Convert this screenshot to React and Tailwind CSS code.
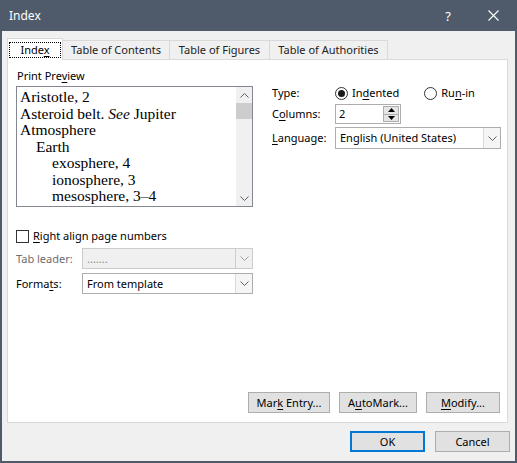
import { useState } from "react";

const ui = { fontFamily: '"Noto Sans", "Open Sans", sans-serif' };
const serif = { fontFamily: '"Liberation Serif", "Times New Roman", serif' };

// letter with keyboard mnemonic underline
const K = ({ children }) => (
  <span className="underline underline-offset-[2px] decoration-[1px]">{children}</span>
);

const Chevron = ({ up = false, color = "#606060" }) => (
  <svg width="9" height="5" viewBox="0 0 9 5" className={up ? "rotate-180" : ""}>
    <path d="M0.5 0.5 L4.5 4.5 L8.5 0.5" fill="none" stroke={color} strokeWidth="1" />
  </svg>
);

const Tri = ({ up = false }) => (
  <svg width="7" height="4" viewBox="0 0 7 4">
    {up ? <path d="M0 4 L3.5 0 L7 4 Z" fill="#000" /> : <path d="M0 0 L3.5 4 L7 0 Z" fill="#000" />}
  </svg>
);

const Combo = ({ value, disabled = false, className = "" }) => (
  <div
    className={`flex h-[21px] items-stretch border ${
      disabled ? "border-[#cccccc] bg-[#f0f0f0] text-[#8a8a8a]" : "border-[#adadad] bg-white text-black"
    } ${className}`}
  >
    <div className="flex flex-1 items-center pl-[4px]">{value}</div>
    <div
      className={`flex w-[17px] items-center justify-center border-l ${
        disabled ? "border-[#cccccc]" : "border-[#d9d9d9] bg-[#f5f5f5]"
      }`}
    >
      <Chevron color={disabled ? "#a0a0a0" : "#606060"} />
    </div>
  </div>
);

const Btn = ({ children, w, focus = false }) => (
  <button
    className={`flex h-[21px] items-center justify-center bg-[#e1e1e1] text-black ${
      focus ? "border-2 border-[#0078d7]" : "border border-[#adadad]"
    }`}
    style={{ width: w }}
  >
    <span>{children}</span>
  </button>
);

const Radio = ({ checked }) => (
  <span className="flex h-[13px] w-[13px] items-center justify-center rounded-full border border-[#333333] bg-white">
    {checked && <span className="h-[7px] w-[7px] rounded-full bg-[#1a1a1a]" />}
  </span>
);

const previewLines = [
  { indent: 0, text: <>Aristotle, 2</> },
  { indent: 0, text: <>Asteroid belt. <i>See</i> Jupiter</> },
  { indent: 0, text: <>Atmosphere</> },
  { indent: 1, text: <>Earth</> },
  { indent: 2, text: <>exosphere, 4</> },
  { indent: 2, text: <>ionosphere, 3</> },
  { indent: 2, text: <>mesosphere, 3–4</> },
];

const tabs = [
  { label: "Table of Contents", w: 107 },
  { label: "Table of Figures", w: 100 },
  { label: "Table of Authorities", w: 118 },
];

export default function App() {
  const [type, setType] = useState("indented");

  return (
    <div className="flex h-[463px] w-[517px] flex-col bg-[#4f5b6a] text-[11px] leading-[16px]" style={ui}>
      {/* title bar */}
      <div className="flex h-[31px] shrink-0 items-center pl-[9px] text-white">
        <span className="flex-1 text-[12px]">Index</span>
        <span className="mr-[37px] text-[13px]">?</span>
        <svg width="11" height="11" viewBox="0 0 11 11" className="mr-[18px]">
          <path d="M0.5 0.5 L10.5 10.5 M10.5 0.5 L0.5 10.5" stroke="#ffffff" strokeWidth="1.1" />
        </svg>
      </div>

      <div className="mx-[2px] mb-[2px] flex flex-1 flex-col bg-[#f0f0f0] pl-[5px] pr-[5px] pt-[7px]">
        {/* tabs */}
        <div className="flex h-[21px] items-end">
          <div className="relative z-10 -mb-[1px] flex h-[22px] w-[56px] items-center justify-center border-x border-t border-[#d9d9d9] bg-white">
            <span className="border border-dotted border-black px-[10px] leading-[14px]">
              Inde<K>x</K>
            </span>
          </div>
          {tabs.map((t) => (
            <div
              key={t.label}
              className="flex h-[19px] items-center justify-center border-t border-r border-[#d9d9d9] text-[#222]"
              style={{ width: t.w }}
            >
              {t.label}
            </div>
          ))}
        </div>

        {/* tab panel */}
        <div className="mr-[2px] flex h-[364px] flex-col border border-[#d9d9d9] bg-white">
          <div className="flex">
            {/* left column */}
            <div className="ml-[8px] flex w-[237px] flex-col pt-[8px]">
              <div className="pl-[1px]">
                Print Pre<K>v</K>iew
              </div>
              <div className="mt-[2px] flex h-[121px] border border-[#828790] bg-white">
                <div className="flex-1 overflow-hidden pl-[3px] pt-[2px] text-[15.5px] leading-[16.5px]" style={serif}>
                  {previewLines.map((l, i) => (
                    <div key={i} className="whitespace-nowrap" style={{ paddingLeft: l.indent * 16 }}>
                      {l.text}
                    </div>
                  ))}
                </div>
                <div className="flex w-[16px] flex-col bg-[#f0f0f0]">
                  <div className="flex h-[16px] items-center justify-center">
                    <Chevron up color="#606060" />
                  </div>
                  <div className="h-[16px] bg-[#cdcdcd]" />
                  <div className="flex-1" />
                  <div className="flex h-[16px] items-center justify-center">
                    <Chevron color="#606060" />
                  </div>
                </div>
              </div>

              <label className="mt-[21px] flex items-center">
                <span className="h-[13px] w-[13px] border border-[#333333] bg-white" />
                <span className="ml-[4px]">
                  <K>R</K>ight align page numbers
                </span>
              </label>

              <div className="mt-[4px] flex items-center">
                <span className="w-[66px] text-[#6d6d6d]">Tab leader:</span>
                <Combo value="......." disabled className="flex-1" />
              </div>
              <div className="mt-[4px] flex items-center">
                <span className="w-[66px]">
                  Forma<K>t</K>s:
                </span>
                <Combo value="From template" className="flex-1" />
              </div>
            </div>

            {/* right column */}
            <div className="ml-[19px] flex flex-1 flex-col pr-[6px] pt-[23px]">
              <div className="flex h-[20px] items-center">
                <span className="w-[63px]">Type:</span>
                <button className="flex items-center" onClick={() => setType("indented")}>
                  <Radio checked={type === "indented"} />
                  <span className="ml-[4px]">
                    In<K>d</K>ented
                  </span>
                </button>
                <button className="ml-[25px] flex items-center" onClick={() => setType("runin")}>
                  <Radio checked={type === "runin"} />
                  <span className="ml-[4px]">
                    Ru<K>n</K>-in
                  </span>
                </button>
              </div>
              <div className="mt-[1px] flex h-[20px] items-center">
                <span className="w-[63px]">
                  C<K>o</K>lumns:
                </span>
                <div className="flex h-[20px] w-[66px] items-stretch border border-[#adadad] bg-white">
                  <span className="flex flex-1 items-center pl-[3px]">2</span>
                  <div className="my-[1px] mr-[1px] flex w-[16px] flex-col">
                    <span className="flex flex-1 items-center justify-center border border-[#adadad] bg-[#e5e5e5]">
                      <Tri up />
                    </span>
                    <span className="flex flex-1 items-center justify-center border border-t-0 border-[#adadad] bg-[#e5e5e5]">
                      <Tri />
                    </span>
                  </div>
                </div>
              </div>
              <div className="mt-[3px] flex items-center">
                <span className="w-[63px]">
                  <K>L</K>anguage:
                </span>
                <Combo value="English (United States)" className="h-[22px] flex-1" />
              </div>
            </div>
          </div>

          <div className="mt-auto flex justify-end gap-[9px] pb-[9px] pr-[7px]">
            <Btn w={82}>
              Mar<K>k</K> Entry...
            </Btn>
            <Btn w={78}>
              A<K>u</K>toMark...
            </Btn>
            <Btn w={74}>
              <K>M</K>odify...
            </Btn>
          </div>
        </div>

        {/* dialog buttons */}
        <div className="mt-[8px] flex justify-end gap-[10px]">
          <Btn w={75} focus>
            OK
          </Btn>
          <Btn w={75}>Cancel</Btn>
        </div>
      </div>
    </div>
  );
}
